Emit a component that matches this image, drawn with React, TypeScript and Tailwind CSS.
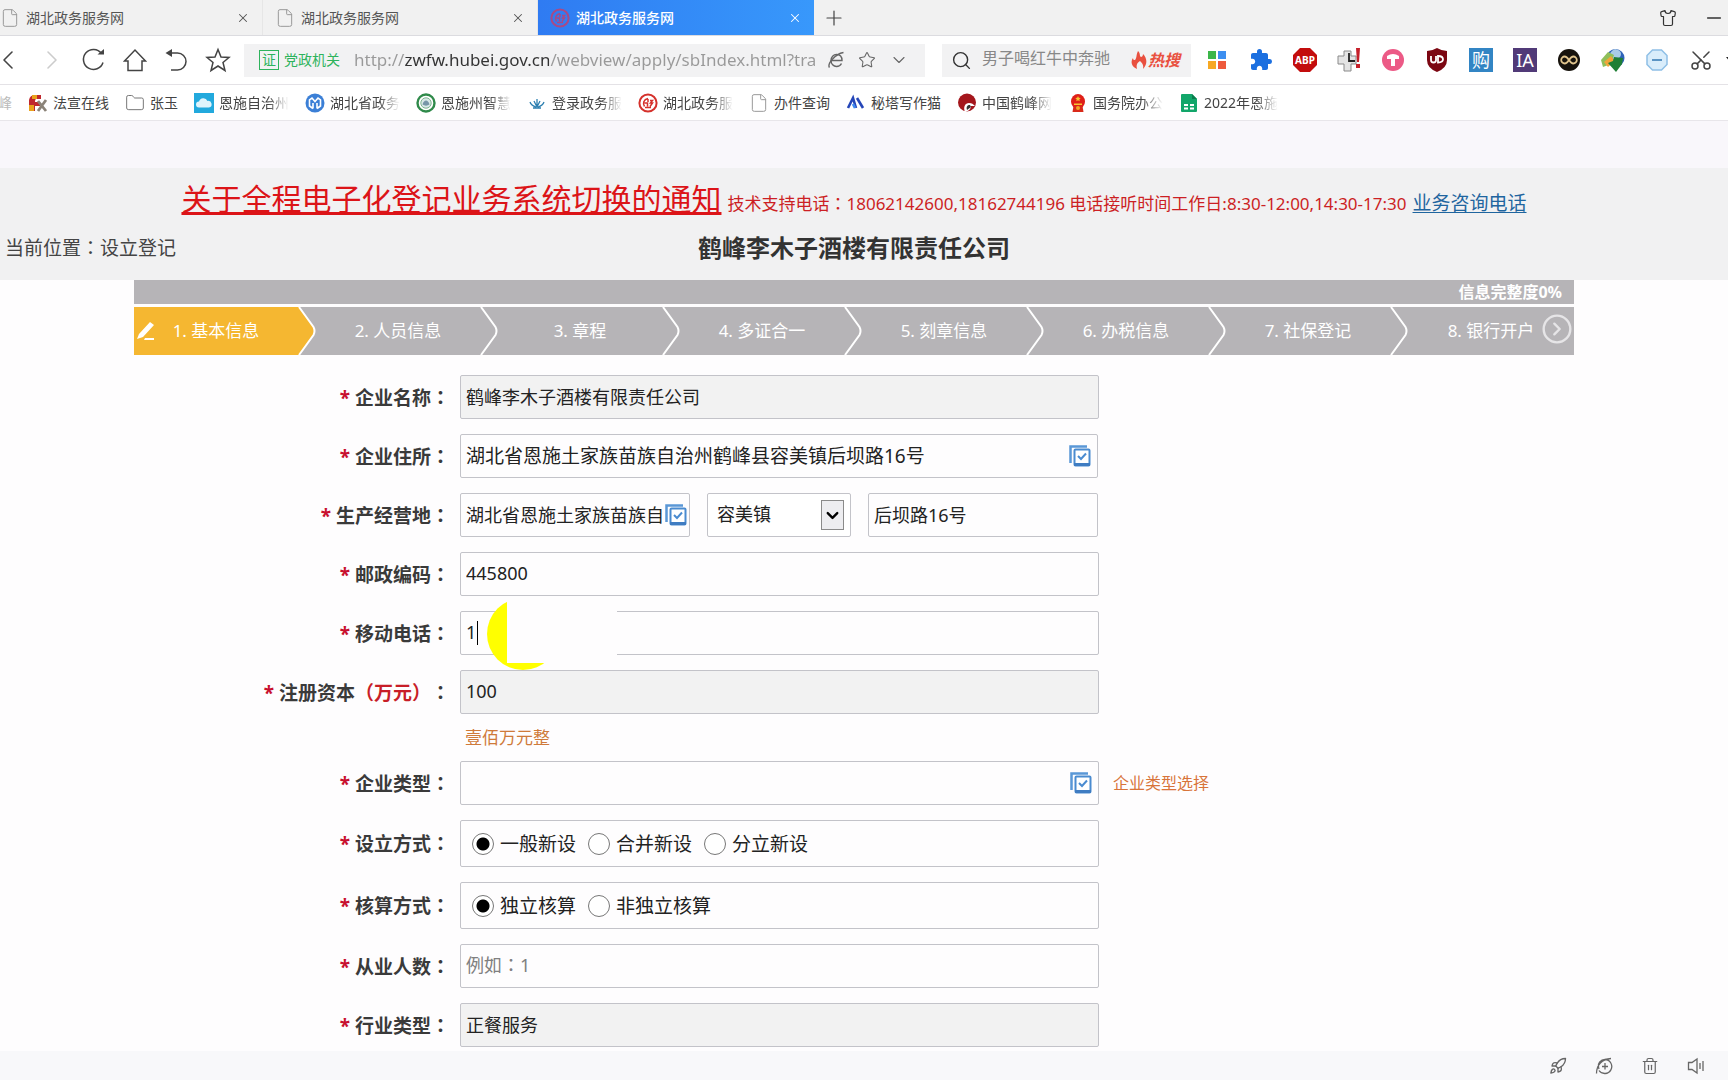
import type { ReactNode } from 'react';
import {
    ChevronDown,
    ChevronLeft,
    ChevronRight,
    CircleChevronRight,
    File,
    Folder,
    Minus,
    Plus,
    Rocket,
    Scissors,
    Search,
    Shirt,
    Star,
    Trash2,
    X,
} from 'lucide-react';
import { MdExtension } from 'react-icons/md';

const tabs = ['湖北政务服务网', '湖北政务服务网', '湖北政务服务网'];

const steps = ['基本信息', '人员信息', '章程', '多证合一', '刻章信息', '办税信息', '社保登记', '银行开户'];

const fieldClass = 'h-11 w-full rounded-xs border border-[#c3c3c9] px-[5px] pb-[2px] text-lg text-[#222] outline-none';

/* ---------- logos ---------- */

function SealLogo({ color = '#d5312c' }: { color?: string }) {
    return (
        <svg width="20" height="20" viewBox="0 0 20 20" fill="none" stroke={color}>
            <circle cx="10" cy="10" r="8.6" strokeWidth="2" />
            <path d="M6.5 13.500c-2-3-1-7 3.500-8M6.500 10h3v3.500M10 6v3M12 7.500h2.500l-2 2.500h2l-2.500 3.500M7 14.500h6" strokeWidth="1.500" />
        </svg>
    );
}

function FxLogo() {
    return (
        <svg width="20" height="20" viewBox="0 0 20 20" fill="none">
            <path d="M1 7q1-5 6-5h6v4H8q-1 0-1 3h5v4H7v5H1z" fill="#c0272d" />
            <path d="M4 2h5v4H4zM1 12h5v6H1z" fill="#e9a21b" />
            <path d="M10 8l8 10M18 7l-8 11" stroke="#8b8378" strokeWidth="2.800" />
        </svg>
    );
}

function CloudLogo() {
    return (
        <svg width="20" height="20" viewBox="0 0 20 20">
            <rect width="20" height="20" fill="#22a9dd" />
            <path d="M5 14.500a3 3 0 0 1 0-6 4.500 4.500 0 0 1 8.500-.5 3.300 3.300 0 0 1 1.500 6.500z" fill="#dff4fc" />
        </svg>
    );
}

function BlueHexLogo() {
    return (
        <svg width="20" height="20" viewBox="0 0 20 20" fill="none">
            <circle cx="10" cy="10" r="9.500" fill="#3b7fd6" />
            <path d="M8 15.500L4.500 13V7L7 5l3 3.500L13 5l2.500 2v6L12 15.500M8 10v5.500M12 10v5.500" stroke="#fff" strokeWidth="1.600" />
        </svg>
    );
}

function GreenRingLogo() {
    return (
        <svg width="20" height="20" viewBox="0 0 20 20" fill="none">
            <circle cx="10" cy="10" r="8.500" stroke="#2f8a4a" strokeWidth="2.400" />
            <circle cx="10" cy="10" r="5.200" fill="#d8e8e6" stroke="#7fb592" />
            <path d="M6.500 11.500c1-3 2-4 3.500-4s2.500 1 3.500 4c-2 1.500-5 1.500-7 0z" fill="#7796a8" />
        </svg>
    );
}

function LotusLogo() {
    return (
        <svg width="20" height="20" viewBox="0 0 20 20" fill="none" stroke="#2c7fb0" strokeWidth="1.300">
            <path d="M10 14V6M10 14L7 8M10 14l3-6M9 14C6 13 4 12 3 9M11 14c3-1 5-2 6-5M6 15h8" />
        </svg>
    );
}

function PeakLogo() {
    return (
        <svg width="20" height="20" viewBox="0 0 20 20" fill="none" strokeWidth="2.600">
            <path d="M2 15L7 5l3 10" stroke="#2546b8" />
            <path d="M11 5l6 10" stroke="#2546b8" />
            <path d="M7 11l2 4" stroke="#3f8af0" />
        </svg>
    );
}

function CraneLogo() {
    return (
        <svg width="20" height="20" viewBox="0 0 20 20">
            <circle cx="10" cy="9.500" r="9" fill="#a4161c" />
            <path d="M8 19c-2-5 0-9 4-9 3 0 4 1 6 3l-4 0c0 3-2 5-6 6z" fill="#fff" />
            <path d="M10 17c-1-3 0-5 3-5l1 2z" fill="#333" />
        </svg>
    );
}

function EmblemLogo() {
    return (
        <svg width="20" height="20" viewBox="0 0 20 20">
            <ellipse cx="10" cy="8.500" rx="7" ry="7.500" fill="#df1f18" />
            <path d="M5.500 13h9l1 6h-11z" fill="#d92a1a" />
            <path d="M10 3l.8 1.800 2 .2-1.500 1.300.4 2L10 7.300l-1.700 1 .4-2L7.200 5l2-.2zM6 10.500h8V12H6z" fill="#f7c631" />
            <circle cx="10" cy="15" r="2" fill="#f0a823" />
        </svg>
    );
}

function SheetLogo() {
    return (
        <svg width="20" height="20" viewBox="0 0 20 20">
            <path d="M2 2a1 1 0 0 1 1-1h10l5 5v12a1 1 0 0 1-1 1H3a1 1 0 0 1-1-1z" fill="#12a66a" />
            <path d="M13 1l5 5h-5z" fill="#0a7d4d" />
            <path d="M5 11h4v2H5zM11 11h4v2h-4zM5 14.500h4v2H5zM11 14.500h4v2h-4z" fill="#fff" />
        </svg>
    );
}

function PageLogo() {
    return <File className="h-5 w-5 text-[#999]" strokeWidth={1.2} />;
}

const bookmarks: { name: string; icon: ReactNode; fade?: boolean }[] = [
    { name: '法宣在线', icon: <FxLogo /> },
    { name: '张玉', icon: <Folder className="h-5 w-5 text-[#777]" strokeWidth={1.2} /> },
    { name: '恩施自治州', icon: <CloudLogo />, fade: true },
    { name: '湖北省政务', icon: <BlueHexLogo />, fade: true },
    { name: '恩施州智慧', icon: <GreenRingLogo />, fade: true },
    { name: '登录政务服', icon: <LotusLogo />, fade: true },
    { name: '湖北政务服', icon: <SealLogo />, fade: true },
    { name: '办件查询', icon: <PageLogo /> },
    { name: '秘塔写作猫', icon: <PeakLogo /> },
    { name: '中国鹤峰网', icon: <CraneLogo />, fade: true },
    { name: '国务院办公', icon: <EmblemLogo />, fade: true },
    { name: '2022年恩施', icon: <SheetLogo />, fade: true },
];

const extensions: { name: string; icon: ReactNode }[] = [
    {
        name: '应用',
        icon: (
            <svg viewBox="0 0 24 24">
                <path d="M3 3h8v8H3z" fill="#3cb64a" />
                <path d="M13 3h8v8h-8z" fill="#3d8ff0" />
                <path d="M3 13h8v8H3z" fill="#f7a823" />
                <path d="M13 13h8v8h-8z" fill="#ee5a3c" />
            </svg>
        ),
    },
    { name: '扩展', icon: <MdExtension className="h-6 w-6 text-[#1b6fe0]" /> },
    {
        name: 'ABP',
        icon: (
            <svg viewBox="0 0 24 24">
                <path d="M7 0h10l7 7v10l-7 7H7l-7-7V7z" fill="#c30d0d" />
                <text x="12" y="16" textAnchor="middle" fontSize="10" fontWeight="700" fill="#fff">ABP</text>
            </svg>
        ),
    },
    {
        name: '时钟',
        icon: (
            <svg viewBox="0 0 24 24" fill="none">
                <path d="M7 3h7v5h5v8h-5v7H7v-7H1V8h6z" fill="#e4e4e4" stroke="#8a8a8a" />
                <path d="M12 5v8h6" stroke="#222" strokeWidth="1.800" />
                <path d="M19 0h4l-1 14h-2zM19 16h4v4h-4z" fill="#c5202a" />
            </svg>
        ),
    },
    {
        name: 'T',
        icon: (
            <svg viewBox="0 0 24 24">
                <circle cx="12" cy="12" r="11" fill="#ec5a86" />
                <path d="M6 8q6-4 12 0v3h-4v7h-4v-7H6z" fill="#fff" />
            </svg>
        ),
    },
    {
        name: 'uBlock',
        icon: (
            <svg viewBox="0 0 24 24">
                <path d="M12 0q5 3 10 3v9q0 8-10 12Q2 20 2 12V3q5 0 10-3z" fill="#7c0712" />
                <path d="M6 8v4q0 2.500 2.500 2.500T11 12V8M13 8v6.500q5 0 5-3.200T13 8z" fill="none" stroke="#fff" strokeWidth="1.800" />
            </svg>
        ),
    },
    {
        name: '购',
        icon: <span className="flex h-6 w-6 items-center justify-center bg-[#3285c4] text-lg leading-6 text-white">购</span>,
    },
    {
        name: 'IA',
        icon: <span className="flex h-6 w-6 items-center justify-center bg-[#513a78] text-lg leading-6 text-white">IA</span>,
    },
    {
        name: '无限',
        icon: (
            <svg viewBox="0 0 24 24">
                <circle cx="12" cy="12" r="11" fill="#17130d" />
                <path d="M12 12c-2-3-3-3.500-4.300-3.500a3.500 3.500 0 0 0 0 7C9 15.500 10 15 12 12s3-3.500 4.300-3.500a3.500 3.500 0 0 1 0 7C15 15.500 14 15 12 12z" fill="none" stroke="#e0c48d" strokeWidth="1.800" />
            </svg>
        ),
    },
    {
        name: '下载',
        icon: (
            <svg viewBox="0 0 24 24">
                <circle cx="14.500" cy="10" r="9" fill="#2e62b8" />
                <path d="M14 1q6 1 6 5t-5 5-6-3 5-7z" fill="#a9cbe8" />
                <path d="M0 12L7 4l6 3-3 9-8 3z" fill="#8fbf5a" />
                <path d="M3 14l7-6 4 5-7 6z" fill="#f0a53a" />
                <path d="M7 15l5-2 1-4 9 1-1 6-6 8z" fill="#1f7f35" />
            </svg>
        ),
    },
    {
        name: '减号',
        icon: (
            <svg viewBox="0 0 24 24" fill="none" stroke="#8ebfe6">
                <path d="M7.500 2h9L22 7.500v9L16.500 22h-9L2 16.500v-9z" fill="#d9edfb" strokeWidth="1.500" />
                <path d="M7 12h10" stroke="#5b94c4" strokeWidth="2" />
            </svg>
        ),
    },
    { name: '截图', icon: <Scissors className="h-6 w-6 -rotate-90 text-[#444]" strokeWidth={1.5} /> },
];

/* ---------- browser frame ---------- */

function TabStrip() {
    return (
        <div className="flex h-9 items-stretch overflow-hidden border-b border-[#dcdce0] bg-[#f1f1f1] text-sm text-[#555]">
            <div className="-ml-3 flex">
                {tabs.map((tab, i) => {
                    const active = i === 2;
                    return (
                        <div
                            key={i}
                            className={
                                active
                                    ? 'flex w-[276px] items-center bg-linear-to-r from-[#2f7bf2] to-[#3898fb] pr-3 pl-3 font-medium text-white'
                                    : 'flex w-[275px] items-center border-r border-[#e6e6e6] pr-3 pl-3'
                            }
                        >
                            {active ? <SealLogo color="#a84a86" /> : <PageLogo />}
                            <span className="ml-[6px] flex-1">{tab}</span>
                            <button type="button" aria-label="关闭标签页">
                                <X className="h-[14px] w-[14px]" strokeWidth={1.8} />
                            </button>
                        </div>
                    );
                })}
            </div>
            <button type="button" aria-label="新建标签页" className="ml-2 text-[#444]">
                <Plus className="h-6 w-6" strokeWidth={1.2} />
            </button>
            <div className="mr-[3px] ml-auto flex items-center gap-[26px] text-[#333]">
                <button type="button" aria-label="皮肤">
                    <Shirt className="h-[18px] w-[18px]" strokeWidth={1.6} />
                </button>
                <button type="button" aria-label="最小化">
                    <Minus className="h-[22px] w-[22px]" strokeWidth={1.4} />
                </button>
            </div>
        </div>
    );
}

function Toolbar() {
    return (
        <div className="flex h-[49px] items-center overflow-hidden border-b border-[#e4e2e6] bg-white text-[#444]">
            <nav className="flex w-[244px] shrink-0 items-center">
                <button type="button" aria-label="后退" className="-ml-2">
                    <ChevronLeft className="h-8 w-8" strokeWidth={1.2} />
                </button>
                <button type="button" aria-label="前进" className="ml-3 text-[#ccc]">
                    <ChevronRight className="h-8 w-8" strokeWidth={1.2} />
                </button>
                <button type="button" aria-label="刷新" className="ml-[14px]">
                    <svg width="24" height="24" viewBox="0 0 24 24" fill="none" stroke="currentColor" strokeWidth="1.500">
                        <path d="M21 14.500A10 10 0 1 1 19.500 5.500" />
                        <path d="M15.500 6.500h6.500V1z" fill="currentColor" stroke="none" />
                    </svg>
                </button>
                <button type="button" aria-label="主页" className="ml-[17px]">
                    <svg width="24" height="24" viewBox="0 0 24 24" fill="none" stroke="currentColor" strokeWidth="1.500">
                        <path d="M1.500 13L12 2l10.500 11H19v9.500H5V13z" />
                    </svg>
                </button>
                <button type="button" aria-label="撤销" className="ml-[17px]">
                    <svg width="24" height="24" viewBox="0 0 24 24" fill="none" stroke="currentColor" strokeWidth="1.500">
                        <path d="M5 5h8.500a8.500 8.500 0 0 1 0 17H7" />
                        <path d="M8 1v8L1.500 5z" fill="currentColor" stroke="none" />
                    </svg>
                </button>
                <button type="button" aria-label="收藏" className="ml-[17px]">
                    <svg width="26" height="26" viewBox="0 0 26 26" fill="none" stroke="currentColor" strokeWidth="1.500">
                        <path d="M13 2.500l3 7.500 8 .500-6 5 2 8-7-4.500L6 23.500l2-8-6-5 8-.500z" />
                    </svg>
                </button>
            </nav>

            <div className="flex h-[33px] flex-1 items-center bg-[#f2f2f3] pr-4 pl-[15px]">
                <span className="flex h-5 w-5 items-center justify-center border border-[#2eb35c] text-sm leading-5 text-[#2eb35c]">证</span>
                <span className="ml-[5px] text-sm text-[#2eb35c]">党政机关</span>
                <input
                    aria-label="地址栏"
                    readOnly
                    defaultValue="http://zwfw.hubei.gov.cn/webview/apply/sbIndex.html?tra"
                    className="ml-[14px] h-7 min-w-0 flex-1 bg-[linear-gradient(to_right,#999_50px,#333_50px,#333_195px,#999_195px)] bg-clip-text pb-[2px] text-[17px] text-transparent outline-none"
                />
                <div className="ml-[11px] flex items-center gap-[13px] text-[#666]">
                    <button type="button" aria-label="兼容模式">
                        <svg width="18" height="18" viewBox="0 0 18 18" fill="none" stroke="currentColor" strokeWidth="1.400">
                            <path d="M4 9.500h11c0-4-2.500-6-5.500-6s-5.500 2.500-5.500 6 2.500 6 5.500 6c2.500 0 4-1 5-3" />
                            <path d="M2.500 16.500C0 13 8 3 16.500 1.500" />
                        </svg>
                    </button>
                    <button type="button" aria-label="添加收藏">
                        <Star className="h-[18px] w-[18px]" strokeWidth={1.4} />
                    </button>
                    <button type="button" aria-label="展开">
                        <ChevronDown className="h-5 w-5" strokeWidth={1.3} />
                    </button>
                </div>
            </div>

            <div className="ml-[17px] flex h-[33px] w-[249px] shrink-0 items-center bg-[#f2f2f3] pl-[9px]">
                <Search className="h-[21px] w-[21px] text-[#333]" strokeWidth={1.6} />
                <input
                    aria-label="搜索"
                    readOnly
                    defaultValue="男子喝红牛中奔驰"
                    className="ml-[10px] h-6 w-[138px] pb-1 text-base text-[#888] outline-none"
                />
                <a href="#hot" className="ml-[10px] flex items-center text-base font-bold text-[#e9503f] italic">
                    <svg width="18" height="20" viewBox="0 0 18 20" fill="currentColor">
                        <path d="M8 1c3 3 1 5 3 6 1 0 2-1 2-3 4 4 5 10 0 15 1-4-1-6-3-8-3 2-4 4-3 8-5-2-7-7-4-11 0 2 1 2 2 2 2-2 1-5 3-9z" />
                    </svg>
                    热搜
                </a>
            </div>

            <div className="-mr-[9px] ml-[14px] flex shrink-0 items-center gap-5">
                {extensions.map((ext) => (
                    <button key={ext.name} type="button" aria-label={ext.name} className="h-6 w-6">
                        {ext.icon}
                    </button>
                ))}
                <svg className="-ml-2 h-2 w-3" viewBox="0 0 12 8">
                    <path d="M1 1h10L6 7z" fill="#222" />
                </svg>
            </div>
        </div>
    );
}

function BookmarkBar() {
    return (
        <div className="flex h-9 items-center gap-4 overflow-hidden border-b border-[#e8e6ea] bg-white text-sm whitespace-nowrap text-[#444]">
            <a href="#bookmark" className="-ml-[2px] text-[#bbb]">峰</a>
            {bookmarks.map((item) => (
                <a key={item.name} href="#bookmark" className="flex items-center gap-[5px]">
                    {item.icon}
                    <span className={item.fade ? '[mask-image:linear-gradient(to_right,black_70%,transparent)]' : ''}>{item.name}</span>
                </a>
            ))}
        </div>
    );
}

function StatusBar() {
    return (
        <footer className="flex h-[29px] items-center justify-end gap-7 bg-[#f8f8fa] pr-[23px] text-[#666]">
            <button type="button" aria-label="加速">
                <Rocket className="h-[18px] w-[18px]" strokeWidth={1.8} />
            </button>
            <button type="button" aria-label="浏览模式">
                <svg width="18" height="18" viewBox="0 0 18 18" fill="none" stroke="currentColor" strokeWidth="1.300">
                    <path d="M1.500 16.500C1.500 8 7 2 16 1.500M4 12C2 6 6 2.500 10 2.500a7 7 0 1 1-6 11" />
                    <path d="M10 6v6.500M7 9.500h6" />
                </svg>
            </button>
            <button type="button" aria-label="清理">
                <Trash2 className="h-[18px] w-[18px]" strokeWidth={1.6} />
            </button>
            <button type="button" aria-label="声音">
                <svg width="18" height="18" viewBox="0 0 18 18" fill="none" stroke="currentColor" strokeWidth="1.300">
                    <path d="M1.500 5.500h3.500L10 2v14l-5-3.500H1.500zM13 6v6M16 4v10" />
                </svg>
            </button>
        </footer>
    );
}

/* ---------- page content ---------- */

// Full-width colon that sits in the middle of its box
function Colon() {
    return <span className="font-['Noto_Sans_CJK_TC']">：</span>;
}

function PickButton({ className }: { className: string }) {
    return (
        <button type="button" aria-label="选择" className={`absolute top-[11px] ${className}`}>
            <svg width="22" height="22" viewBox="0 0 22 22" fill="none">
                <path d="M1.500 18V1.500H18" stroke="#5a97d6" strokeWidth="2.500" />
                <rect x="5.500" y="4.500" width="15" height="16" rx="1" fill="#fff" stroke="#4a8bd0" strokeWidth="2" />
                <path d="M5 18h16v3H5z" fill="#3f7cc2" />
                <path d="M9 11l3 3 5-5.500" stroke="#4a8bd0" strokeWidth="2" />
            </svg>
        </button>
    );
}

function Row({ id, label, unit, group, children }: { id: string; label: string; unit?: string; group?: boolean; children: ReactNode }) {
    const text = (
        <>
            <span className="mr-[5px] text-[#c8102e]">*</span>
            {label}
            {unit && <span className="text-[#c81e28]">{unit}</span>}
            <Colon />
        </>
    );
    const cls = 'w-[316px] shrink-0 text-right text-[19px] leading-6 font-bold text-[#3a3a3a] [text-spacing-trim:space-all]';
    return (
        <div className="flex items-center gap-[10px]">
            {group ? (
                <span id={id} className={cls}>{text}</span>
            ) : (
                <label htmlFor={id} className={cls}>{text}</label>
            )}
            {children}
        </div>
    );
}

function RadioBox({ id, options }: { id: string; options: string[] }) {
    return (
        <div
            role="radiogroup"
            aria-labelledby={id}
            className="flex h-[47px] w-full max-w-[639px] items-center gap-3 rounded-xs border border-[#c3c3c9] px-[11px] text-[19px] text-[#222]"
        >
            {options.map((option, i) => (
                <label key={option} className="flex items-center gap-[6px]">
                    <input
                        type="radio"
                        name={id}
                        defaultChecked={i === 0}
                        className="h-[22px] w-[22px] appearance-none rounded-full border border-[#777] bg-white checked:bg-[radial-gradient(circle,#000_6px,#fff_7px)]"
                    />
                    <span className="pt-[2px]">{option}</span>
                </label>
            ))}
        </div>
    );
}

function Steps() {
    return (
        <ol className="mt-[3px] grid h-12 grid-cols-[repeat(7,182fr)_166fr] bg-[#b6b4b7] text-[17px] text-white">
            {steps.map((step, i) => (
                <li
                    key={step}
                    className={`relative flex items-center justify-center ${i === 0 ? 'bg-[#f5b731]' : ''} ${i < 7 ? 'pr-[18px]' : ''}`}
                >
                    {i === 0 && (
                        <svg className="absolute left-[2px]" width="20" height="20" viewBox="0 0 20 20" fill="#fff">
                            <path d="M1 18l2-5L14 1l4 3L7 16zM9 17h9v2H8z" />
                        </svg>
                    )}
                    <a href="#step">{`${i + 1}. ${step}`}</a>
                    {i < 7 && (
                        <svg className="absolute top-0 right-0" width="18" height="48" viewBox="0 0 18 48">
                            <path d="M1 0h17v48H1l14-20q2-4 0-8z" fill="#b6b4b7" />
                            <path d="M1 0l14.500 20q2 4 0 8L1 48" fill="none" stroke="#fff" strokeWidth="2" />
                        </svg>
                    )}
                    {i === 7 && (
                        <button type="button" aria-label="下一步" className="absolute top-[6px] right-[1px] text-[#e6e5e7]">
                            <CircleChevronRight className="h-8 w-8" strokeWidth={1.8} />
                        </button>
                    )}
                </li>
            ))}
        </ol>
    );
}

function CompanyForm() {
    return (
        <form className="mt-5 flex flex-col gap-[15px]">
            <Row id="name" label="企业名称">
                <input id="name" readOnly defaultValue="鹤峰李木子酒楼有限责任公司" className={`${fieldClass} max-w-[639px] bg-[#f2f2f2]`} />
            </Row>

            <Row id="address" label="企业住所">
                <div className="relative w-full max-w-[638px]">
                    <input
                        id="address"
                        defaultValue="湖北省恩施土家族苗族自治州鹤峰县容美镇后坝路16号"
                        className="h-11 w-full rounded-xs border border-[#c3c3c9] px-[5px] pb-[2px] text-[19px] text-[#222] outline-none"
                    />
                    <PickButton className="right-[7px]" />
                </div>
            </Row>

            <Row id="place" label="生产经营地">
                <div className="flex w-full max-w-[638px] gap-[17px]">
                    <div className="relative min-w-0 flex-1">
                        <input id="place" defaultValue="湖北省恩施土家族苗族自治州鹤峰县" className={`${fieldClass} pr-[26px]`} />
                        <PickButton className="right-[3px]" />
                    </div>
                    <div className="relative w-36">
                        <select aria-label="乡镇" className="h-11 w-full appearance-none rounded-xs border border-[#c3c3c9] bg-white pb-[2px] pl-[9px] text-lg text-[#222]">
                            <option>容美镇</option>
                        </select>
                        <span className="pointer-events-none absolute top-[7px] right-[7px] flex h-[30px] w-[23px] items-center justify-center border border-[#8a8a8a] bg-[#ededf0]">
                            <ChevronDown className="h-[19px] w-[19px] text-black" strokeWidth={3} />
                        </span>
                    </div>
                    <div className="min-w-0 flex-1">
                        <input aria-label="详细地址" defaultValue="后坝路16号" className={fieldClass} />
                    </div>
                </div>
            </Row>

            <Row id="zip" label="邮政编码">
                <input id="zip" defaultValue="445800" className={`${fieldClass} max-w-[639px]`} />
            </Row>

            <Row id="phone" label="移动电话">
                <div className="relative w-full max-w-[639px]">
                    <input id="phone" defaultValue="1" className={fieldClass} />
                    <span className="absolute top-[10px] left-[17px] h-6 w-px bg-black" />
                    {/* pointer highlight, partly covered by the blank suggestion popup */}
                    <span className="absolute -top-[13px] left-[27px] h-[72px] w-[72px] rounded-full bg-[#ffff00]" />
                    <span className="absolute -top-[14px] left-[47px] h-[66px] w-[110px] bg-[#fefdfe]" />
                </div>
            </Row>

            <Row id="capital" label="注册资本" unit="（万元）">
                <input id="capital" readOnly defaultValue="100" className={`${fieldClass} max-w-[639px] bg-[#f2f2f2]`} />
            </Row>

            <p className="pl-[331px] text-[17px] leading-[17px] text-[#cf7a3a]">壹佰万元整</p>

            <Row id="kind" label="企业类型">
                <div className="relative w-full max-w-[639px]">
                    <input id="kind" className={fieldClass} />
                    <PickButton className="right-[7px]" />
                </div>
                <a href="#kind" className="ml-1 shrink-0 text-base text-[#d8743a]">企业类型选择</a>
            </Row>

            <Row id="setup" label="设立方式" group>
                <RadioBox id="setup" options={['一般新设', '合并新设', '分立新设']} />
            </Row>

            <Row id="accounting" label="核算方式" group>
                <RadioBox id="accounting" options={['独立核算', '非独立核算']} />
            </Row>

            <Row id="staff" label="从业人数">
                <input
                    id="staff"
                    placeholder="例如：1"
                    className={`${fieldClass} max-w-[639px] placeholder:font-['Noto_Sans','Noto_Sans_CJK_TC'] placeholder:text-[#808080]`}
                />
            </Row>

            <Row id="industry" label="行业类型">
                <input id="industry" readOnly defaultValue="正餐服务" className={`${fieldClass} max-w-[639px] bg-[#f2f2f2]`} />
            </Row>
        </form>
    );
}

export default function App() {
    return (
        <div className="flex min-h-screen flex-col bg-[#fefdfe] font-['Noto_Sans','Noto_Sans_CJK_SC',sans-serif]">
            <header>
                <TabStrip />
                <Toolbar />
                <BookmarkBar />
            </header>

            <main className="flex-1">
                <div className="h-[47px] bg-[#f9f7fb]" />

                <section className="h-28 bg-[#f1f1f2] pr-5">
                    <p className="flex h-[60px] items-baseline justify-center gap-[6px] pt-[13px] text-[17px] whitespace-nowrap text-[#cc1f24]">
                        <a href="#notice" className="text-3xl text-[#dc1418] underline underline-offset-2">关于全程电子化登记业务系统切换的通知</a>
                        <span>
                            技术支持电话<Colon />18062142600,18162744196 电话接听时间工作日:8:30-12:00,14:30-17:30
                        </span>
                        <a href="#contact" className="text-[19px] text-[#1f659f] underline underline-offset-2">业务咨询电话</a>
                    </p>
                    <div className="grid grid-cols-[1fr_auto_1fr] items-center whitespace-nowrap">
                        <span className="pl-[5px] text-[19px] text-[#444]">当前位置<Colon />设立登记</span>
                        <h1 className="text-2xl leading-10 font-bold text-[#333]">鹤峰李木子酒楼有限责任公司</h1>
                    </div>
                </section>

                <div className="pr-5">
                    <div className="mx-auto max-w-[1440px]">
                        <div className="h-6 bg-[#b6b4b7] pr-3 text-right text-base leading-6 font-bold text-white">信息完整度0%</div>
                        <Steps />
                        <CompanyForm />
                    </div>
                </div>
            </main>

            <StatusBar />
        </div>
    );
}
